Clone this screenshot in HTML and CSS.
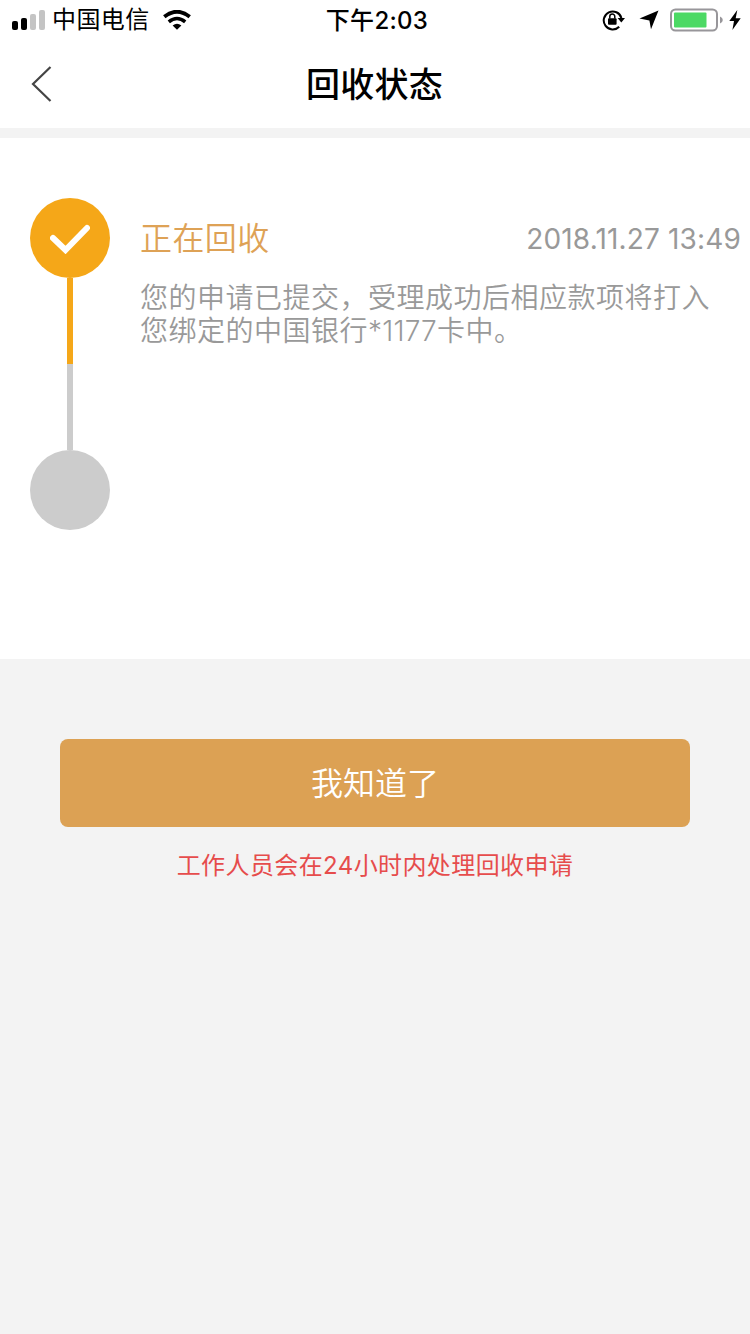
FILE: index.html
```html
<!DOCTYPE html>
<html lang="zh-CN">
<head>
    <meta charset="UTF-8">
    <title>回收状态</title>
    <link rel="stylesheet" href="styles.css">
</head>
<body>
<div class="status-bar">
    <div class="status-left">
        <svg class="signal" width="34" height="20" viewBox="0 0 34 20">
            <rect x="0" y="11" width="6" height="9" rx="2"/>
            <rect x="9" y="8" width="6" height="12" rx="2"/>
            <rect class="off" x="18" y="4" width="6" height="16" rx="2"/>
            <rect class="off" x="27" y="0" width="6" height="20" rx="2"/>
        </svg>
        <span class="carrier">中国电信</span>
        <svg class="wifi" width="28" height="20" viewBox="0 0 28 20">
            <path d="M1.3 6.8Q14 -3.4 26.7 6.8" fill="none" stroke="#000" stroke-width="3.8"/>
            <path d="M5.8 11.8Q14 5.2 22.2 11.8" fill="none" stroke="#000" stroke-width="3.6"/>
            <path d="M9.6 15.4Q14 12 18.4 15.4L14 19.8Z"/>
        </svg>
    </div>
    <div class="time">下午2:03</div>
    <div class="status-right">
        <svg class="lock" width="24" height="22" viewBox="0 0 24 22">
            <path d="M17.2 17.7A9 9 0 1 1 19.4 9" fill="none" stroke="#000" stroke-width="2"/>
            <path d="M15.6 9H23L19.3 13.6Z"/>
            <rect x="6" y="9.2" width="8.6" height="6.6" rx="1"/>
            <path d="M7.8 9.5V7.6a2.5 2.5 0 0 1 5 0V9.5" fill="none" stroke="#000" stroke-width="1.5"/>
        </svg>
        <svg class="location" width="20" height="20" viewBox="0 0 20 20">
            <path d="M19.5 0.5L12 19.3L10.4 10.6L0.5 8.6Z"/>
        </svg>
        <svg class="battery" width="54" height="24" viewBox="0 0 54 24">
            <rect x="1" y="1.5" width="46" height="21" rx="4.5" fill="none" stroke="#98969a" stroke-width="2"/>
            <rect x="4" y="4.5" width="32.5" height="15" rx="1" fill="#4cd964"/>
            <path d="M50 8.5Q52.8 9.5 52.8 12T50 15.5Z" fill="#98969a"/>
        </svg>
        <svg class="bolt" width="12" height="20" viewBox="0 0 12 20">
            <path d="M8.3 0L0.3 11H5L3.4 20L11.7 8.2H6.7Z"/>
        </svg>
    </div>
</div>

<div class="nav">
    <svg class="back" width="24" height="38" viewBox="0 0 24 38">
        <path d="M20.5 2L3 19L20.5 36" fill="none" stroke="#444" stroke-width="2.2"/>
    </svg>
    <h1>回收状态</h1>
</div>

<div class="progress">
    <div class="steps">
        <div class="step done">
            <svg width="40" height="32" viewBox="0 0 40 32">
                <path d="M3 16L15.5 28L37 6" fill="none" stroke="#fff" stroke-width="6" stroke-linecap="round"/>
            </svg>
        </div>
        <div class="line line-done"></div>
        <div class="line"></div>
        <div class="step"></div>
    </div>
    <div class="info">
        <div class="info-head">
            <span class="info-title">正在回收</span>
            <span class="info-date">2018.11.27 13:49</span>
        </div>
        <p class="info-text">您的申请已提交，受理成功后相应款项将打入<br>您绑定的中国银行<span class="card">*1177</span>卡中。</p>
    </div>
</div>

<div class="footer">
    <button class="btn" type="button">我知道了</button>
    <p class="hint">工作人员会在24小时内处理回收申请</p>
</div>
</body>
</html>
```
FILE: styles.css
```css
body {
    font-family: Inter, "Noto Sans CJK SC", sans-serif;
    margin: 0;
    padding: 0;
    background-color: #f3f3f3;
}
h1, p {
    margin: 0;
}
svg {
    display: block;
    flex-shrink: 0;
}

/* Строка состояния */
.status-bar {
    display: grid;
    grid-template-columns: 1fr auto 1fr;
    height: 40px;
    background-color: #fff;
    font-size: 24px;
    line-height: 42px;
    white-space: nowrap;
}
.status-left, .status-right {
    display: flex;
    align-items: center;
    height: 40px;
}
.status-left {
    padding-left: 12px;
}
.status-right {
    justify-content: flex-end;
    padding-right: 9px;
}
.signal .off {
    fill: #c4c4c4;
}
.carrier {
    margin-left: 6px;
    letter-spacing: 0.4px;
}
.wifi {
    margin-left: 13px;
}
.time {
    font-weight: 500;
    padding-left: 4px;
    letter-spacing: 0.3px;
}
.location {
    margin-left: 13px;
}
.battery {
    margin-left: 11px;
}
.bolt {
    margin-left: 5px;
}

/* Заголовок */
.nav {
    display: grid;
    grid-template-columns: 1fr auto 1fr;
    align-items: center;
    height: 88px;
    background-color: #fff;
    border-bottom: 10px solid #f3f3f3;
}
.back {
    margin-left: 30px;
}
.nav h1 {
    padding-top: 2px;
    font-size: 34px;
    font-weight: 500;
    line-height: 86px;
    letter-spacing: 0.3px;
    margin-right: 1px;
}

/* Этапы */
.progress {
    display: flex;
    box-sizing: border-box;
    height: 521px;
    padding: 60px 9px 0 30px;
    background-color: #fff;
}
.steps {
    display: flex;
    flex-direction: column;
    align-items: center;
    width: 80px;
}
.step {
    display: flex;
    align-items: center;
    justify-content: center;
    width: 80px;
    height: 80px;
    border-radius: 50%;
    background-color: #ccc;
}
.line {
    width: 6px;
    height: 86px;
    background-color: #ccc;
}
.step.done, .line-done {
    background-color: #f5a718;
}
.info {
    flex: 1;
    margin-left: 30px;
    white-space: nowrap;
}
.info-head {
    display: flex;
    justify-content: space-between;
    line-height: 82px;
}
.info-title {
    font-size: 32px;
    font-weight: 350;
    letter-spacing: 0.4px;
    color: #dea256;
}
.info-date {
    font-size: 28px;
    letter-spacing: 0.15px;
    color: #999;
}
.info-text {
    margin-top: 2px;
    font-size: 28px;
    font-weight: 350;
    line-height: 33px;
    letter-spacing: 0.5px;
    color: #999;
}
.card {
    letter-spacing: 0.2px;
}

.footer {
    padding: 80px 60px 0;
    text-align: center;
}
.btn {
    display: block;
    width: 100%;
    height: 88px;
    padding: 0 0 4px;
    border: none;
    border-radius: 8px;
    background-color: #dca154;
    color: #fff;
    font-family: inherit;
    font-size: 32px;
    font-weight: 350;
    cursor: pointer;
}
.hint {
    margin-top: 21px;
    font-size: 24px;
    line-height: 36px;
    letter-spacing: 0.4px;
    color: #e64c4c;
}
```
